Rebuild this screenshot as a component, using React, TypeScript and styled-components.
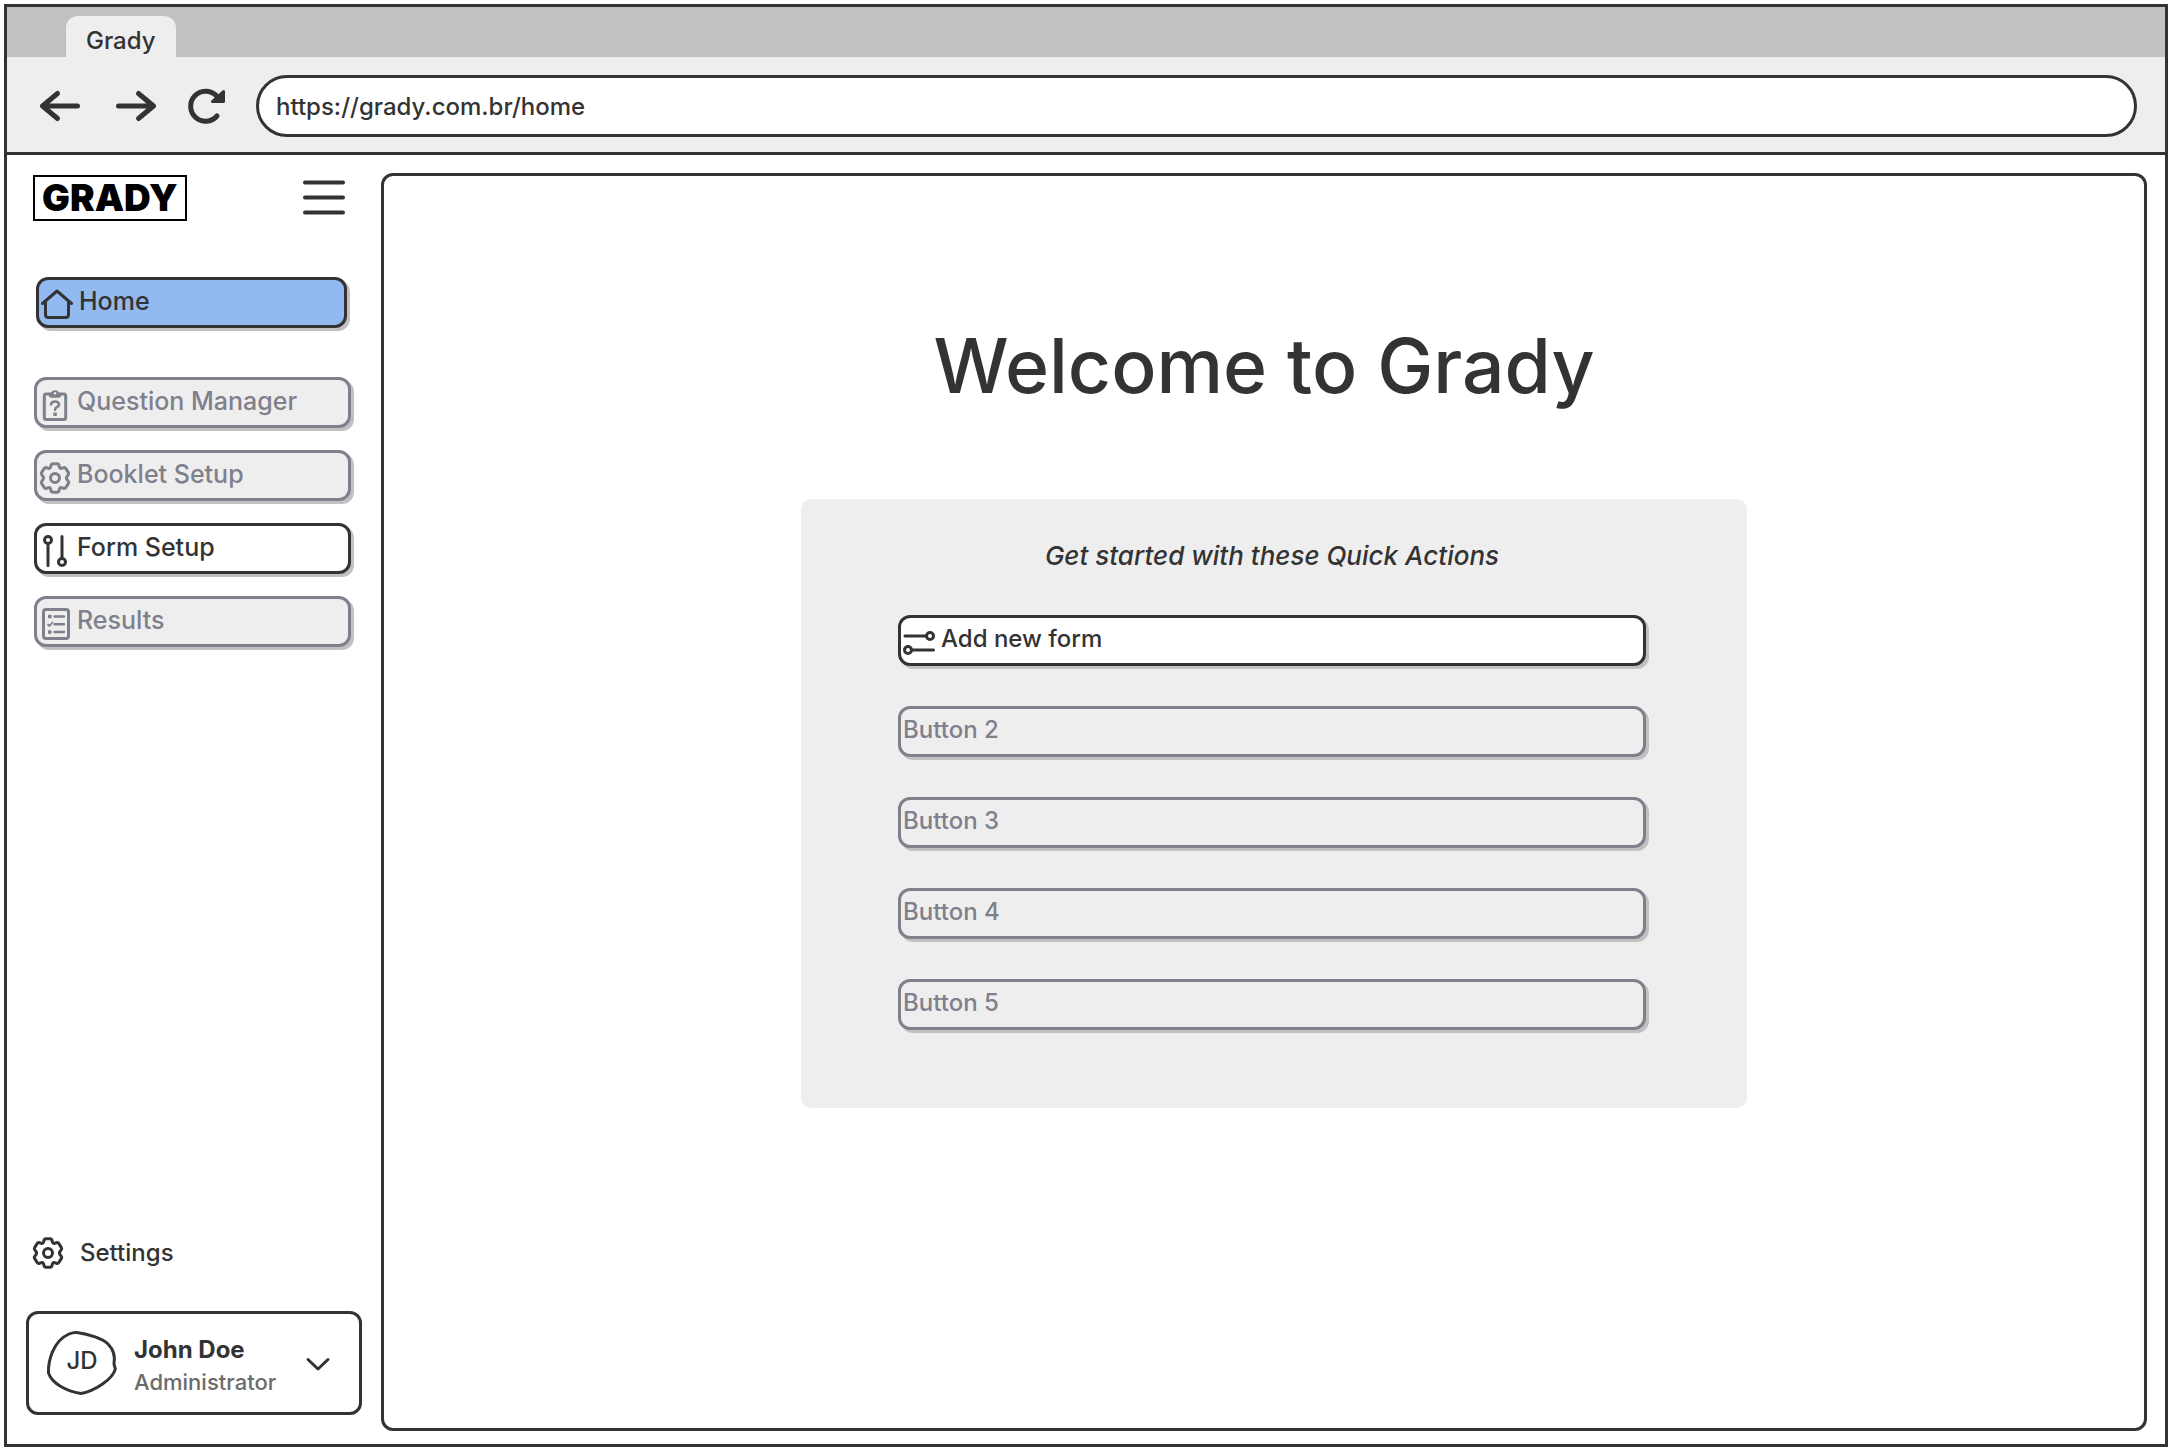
import React from 'react';
import styled, { createGlobalStyle } from 'styled-components';

const INK = '#333333';
const MUTED = '#80808c';
const PAPER = '#ffffff';
const PANEL = '#eeeeee';
const SHADE = '#c1c1c1';
const ACCENT = '#93b9f1';

const GlobalStyle = createGlobalStyle`
  *, *::before, *::after { box-sizing: border-box; }
  body {
    margin: 0;
    padding: 4px 4px 5px;
    background: ${PAPER};
    color: ${INK};
    font-family: Inter, "Open Sans", sans-serif;
    font-size: 24px;
    font-weight: 500;
    line-height: 32px;
  }
  button, input { font: inherit; color: inherit; }
  svg { display: block; overflow: visible; }
`;

const Window = styled.div`
  display: flex;
  flex-direction: column;
  min-height: calc(100vh - 9px);
  border: 3px solid ${INK};
`;

const TabStrip = styled.div`
  display: flex;
  align-items: flex-end;
  height: 50px;
  padding-left: 59px;
  background: ${SHADE};
`;

const Tab = styled.button`
  height: 41px;
  padding: 8px 20px 0;
  border: 0;
  border-radius: 12px 12px 0 0;
  background: ${PANEL};
`;

const Toolbar = styled.div`
  display: flex;
  align-items: center;
  gap: 21px;
  padding: 18px 28px 15px 30px;
  border-bottom: 3px solid ${INK};
  background: ${PANEL};
`;

const HistoryButtons = styled.div`
  display: flex;
  gap: 30px;
`;

const IconButton = styled.button`
  padding: 0;
  border: 0;
  background: none;
`;

const AddressInput = styled.input`
  flex: 1;
  min-width: 0;
  height: 62px;
  padding: 0 17px;
  border: 3px solid ${INK};
  border-radius: 31px;
  background: ${PAPER};
  outline: none;
`;

const Body = styled.div`
  display: flex;
  flex: 1;
`;

const Sidebar = styled.aside`
  display: flex;
  flex-direction: column;
  flex: none;
  width: 374px;
  padding: 20px 19px 29px;
`;

const SidebarHeader = styled.header`
  display: flex;
  align-items: center;
  justify-content: space-between;
  padding: 0 17px 0 7px;
`;

const Logo = styled.div`
  padding: 0 7px;
  border: 2px solid #000000;
  color: #000000;
  font-size: 37px;
  font-weight: 900;
  line-height: 42px;
`;

const Nav = styled.nav`
  display: flex;
  flex-direction: column;
  gap: 49px;
  margin-top: 56px;
`;

const NavGroup = styled.div<{ $inset?: boolean }>`
  display: flex;
  flex-direction: column;
  gap: 22px;
  padding: ${(p) => (p.$inset ? '0 15px 0 10px' : '0 11px 0 8px')};
`;

const ActionButton = styled.button<{ $active?: boolean; $size?: number }>`
  display: flex;
  align-items: center;
  gap: 6px;
  width: 100%;
  height: 51px;
  padding: 0 2px;
  border: 3px solid ${INK};
  border-radius: 12px;
  background: ${(p) => (p.$active ? ACCENT : PAPER)};
  box-shadow: 3px 3px 0 ${SHADE};
  font-size: ${(p) => p.$size ?? 24}px;
  text-align: left;

  &:disabled {
    border-color: ${MUTED};
    background: ${PANEL};
    color: ${MUTED};
  }
  svg { margin-top: 4px; }
`;

const ActionLabel = styled.span`
  padding-bottom: 4px;
`;

const SettingsButton = styled.button`
  display: flex;
  align-items: center;
  gap: 16px;
  margin: auto 0 42px;
  padding: 0 6px;
  border: 0;
  background: none;
`;

const UserCard = styled.button`
  display: flex;
  align-items: center;
  gap: 17px;
  height: 104px;
  padding: 0 29px 0 18px;
  border: 3px solid ${INK};
  border-radius: 12px;
  background: ${PAPER};
  text-align: left;
`;

const Avatar = styled.span`
  display: grid;
  place-items: center;
  width: 70px;
  height: 64px;
  > * { grid-area: 1 / 1; }
`;

const Initials = styled.span`
  padding-bottom: 4px;
`;

const UserText = styled.span`
  display: flex;
  flex: 1;
  flex-direction: column;
  padding-top: 5px;
`;

const UserName = styled.strong`
  font-weight: 700;
`;

const UserRole = styled.span`
  color: #6b6b6b;
  font-size: 22px;
`;

const Main = styled.main`
  display: flex;
  flex: 1;
  flex-direction: column;
  align-items: center;
  min-width: 0;
  margin: 18px 18px 13px 0;
  padding: 145px 20px 40px;
  border: 3px solid ${INK};
  border-radius: 12px;
`;

const Title = styled.h1`
  margin: 0;
  font-size: 75px;
  font-weight: 500;
  line-height: 90px;
`;

const QuickActionsArea = styled.div`
  display: flex;
  justify-content: center;
  width: 100%;
  margin-top: 88px;
  padding-left: 20px;
`;

const QuickActions = styled.section`
  width: 100%;
  max-width: 946px;
  padding: 41px 101px 78px 97px;
  border-radius: 10px;
  background: ${PANEL};
`;

const QuickTitle = styled.h2`
  margin: 0 0 43px;
  font-size: 26px;
  font-style: italic;
  font-weight: 500;
  line-height: 32px;
  text-align: center;
`;

const QuickList = styled.div`
  display: flex;
  flex-direction: column;
  gap: 40px;
`;

type DrawingProps = { width?: number; height?: number; stroke?: number; children: React.ReactNode };

const Drawing = ({ width = 32, height = 32, stroke = 3, children }: DrawingProps) => (
  <svg
    width={width}
    height={height}
    viewBox={`0 0 ${width} ${height}`}
    fill="none"
    stroke="currentColor"
    strokeWidth={stroke}
    strokeLinecap="round"
    strokeLinejoin="round"
    aria-hidden="true"
  >
    {children}
  </svg>
);

const BackIcon = () => (
  <Drawing width={46} height={46} stroke={5}>
    <path d="M20.500 10.500 5.500 23l15 12.500M5.500 23H40.500" />
  </Drawing>
);

const ForwardIcon = () => (
  <Drawing width={46} height={46} stroke={5}>
    <path d="M25.500 10.500 40.500 23l-15 12.500M40.500 23H5.500" />
  </Drawing>
);

const ReloadIcon = () => (
  <Drawing width={46} height={46} stroke={5}>
    <path d="M27.100 12.400A15 15 0 1 0 28 33" />
    <path d="M34.500 8.500v10H23.500Z" fill="currentColor" strokeWidth={3} />
  </Drawing>
);

const MenuIcon = () => (
  <Drawing width={42} height={34} stroke={4}>
    <path d="M2 1.500h38M2 16.500h38M2 31.500h38" />
  </Drawing>
);

const HomeIcon = () => (
  <Drawing>
    <path d="M1.500 14.500 16 2l14.500 12.500M4.500 12.500v13q0 3 3 3h17q3 0 3-3v-13" />
  </Drawing>
);

const QuestionIcon = () => (
  <Drawing>
    <rect x="5.300" y="5" width="21.400" height="25.500" rx="2" />
    <path d="M10.500 4.500h2.200a3.400 3.400 0 0 1 6.600 0h2.200v1.500q0 2-2 2h-7q-2 0-2-2Z" fill="currentColor" strokeWidth={1.5} />
    <circle cx="16" cy="4.300" r="1.200" fill={PANEL} stroke="none" />
    <path d="M12 15.500q.5-3 4-3t4 2.800q0 2-2.300 2.900-1.700.7-1.700 2.600" strokeWidth={2.6} />
    <rect x="14.300" y="23.500" width="3.600" height="3.600" rx=".6" fill="currentColor" stroke="none" />
  </Drawing>
);

const GearIcon = () => (
  <Drawing>
    <path d="M14 1.800H18Q19.600 1.800 20 3.400L20.400 5Q21 6.800 22.800 6.300L24.400 5.700Q26 5.200 26.900 6.600L29.400 10.600Q30.200 12 29 13.200L28.300 13.900Q26.600 16 28.300 18.100L29 18.800Q30.200 20 29.400 21.400L26.900 25.400Q26 26.800 24.400 26.300L22.800 25.700Q21 25.200 20.400 27L20 28.600Q19.600 30.200 18 30.200H14Q12.400 30.200 12 28.600L11.600 27Q11 25.200 9.200 25.700L7.600 26.300Q6 26.800 5.100 25.400L2.600 21.400Q1.800 20 3 18.800L3.700 18.100Q5.400 16 3.700 13.900L3 13.200Q1.800 12 2.600 10.600L5.100 6.600Q6 5.200 7.600 5.700L9.200 6.300Q11 6.800 11.600 5L12 3.400Q12.400 1.800 14 1.800Z" />
    <circle cx="16" cy="16" r="4.500" />
  </Drawing>
);

const SlidersIcon = () => (
  <Drawing>
    <circle cx="9" cy="5" r="3.500" />
    <path d="M9 8.500v22M23 1.500v21.500" />
    <circle cx="23" cy="27" r="3.500" />
  </Drawing>
);

const FlatSlidersIcon = () => (
  <Drawing>
    <circle cx="27" cy="9" r="3.500" />
    <path d="M2 9h21.500M8.500 23h22" />
    <circle cx="5" cy="23" r="3.500" />
  </Drawing>
);

const ResultsIcon = () => (
  <Drawing>
    <rect x="4.500" y="1.500" width="25" height="29" rx="2.500" />
    <path d="M15.500 8.500h9.500M15.500 16.200h9.500M15.500 24h9.500" strokeWidth={2.4} />
    <path d="m9 16.500 1.500 1.500 3-3.500" strokeWidth={1.8} />
    <rect x="9" y="6.700" width="3.600" height="3.600" rx=".6" fill="currentColor" stroke="none" />
    <rect x="9" y="22.200" width="3.600" height="3.600" rx=".6" fill="currentColor" stroke="none" />
  </Drawing>
);

const ChevronIcon = () => (
  <Drawing width={24} height={14}>
    <path d="m2 3.500 10 9.500L22 3.500" />
  </Drawing>
);

const AvatarRing = () => (
  <Drawing width={70} height={64}>
    <path d="M30 1.500C42 3 56 8 61 13C67 19 68.500 25 67 33L68.300 38C66 48 48 60 34 62.500C20 60 5 53 1.500 42C1 30 6 10 22 3Q26 1.300 30 1.500Z" />
  </Drawing>
);

const navItems = [
  { label: 'Question Manager', Icon: QuestionIcon, disabled: true },
  { label: 'Booklet Setup', Icon: GearIcon, disabled: true },
  { label: 'Form Setup', Icon: SlidersIcon, disabled: false },
  { label: 'Results', Icon: ResultsIcon, disabled: true },
];

const quickActions = ['Button 2', 'Button 3', 'Button 4', 'Button 5'];

export default function App() {
  return (
    <>
      <GlobalStyle />
      <Window>
        <TabStrip>
          <Tab type="button">Grady</Tab>
        </TabStrip>
        <Toolbar>
          <HistoryButtons>
            <IconButton type="button" aria-label="Back"><BackIcon /></IconButton>
            <IconButton type="button" aria-label="Forward"><ForwardIcon /></IconButton>
            <IconButton type="button" aria-label="Reload"><ReloadIcon /></IconButton>
          </HistoryButtons>
          <AddressInput type="text" aria-label="Address" defaultValue="https://grady.com.br/home" />
        </Toolbar>
        <Body>
          <Sidebar>
            <SidebarHeader>
              <Logo>GRADY</Logo>
              <IconButton type="button" aria-label="Menu"><MenuIcon /></IconButton>
            </SidebarHeader>
            <Nav>
              <NavGroup $inset>
                <ActionButton type="button" $active $size={25} aria-current="page">
                  <HomeIcon />
                  <ActionLabel>Home</ActionLabel>
                </ActionButton>
              </NavGroup>
              <NavGroup>
                {navItems.map(({ label, Icon, disabled }) => (
                  <ActionButton key={label} type="button" disabled={disabled} $size={25}>
                    <Icon />
                    <ActionLabel>{label}</ActionLabel>
                  </ActionButton>
                ))}
              </NavGroup>
            </Nav>
            <SettingsButton type="button">
              <GearIcon />
              Settings
            </SettingsButton>
            <UserCard type="button">
              <Avatar>
                <AvatarRing />
                <Initials>JD</Initials>
              </Avatar>
              <UserText>
                <UserName>John Doe</UserName>
                <UserRole>Administrator</UserRole>
              </UserText>
              <ChevronIcon />
            </UserCard>
          </Sidebar>
          <Main>
            <Title>Welcome to Grady</Title>
            <QuickActionsArea>
              <QuickActions>
                <QuickTitle>Get started with these Quick Actions</QuickTitle>
                <QuickList>
                  <ActionButton type="button">
                    <FlatSlidersIcon />
                    <ActionLabel>Add new form</ActionLabel>
                  </ActionButton>
                  {quickActions.map((label) => (
                    <ActionButton key={label} type="button" disabled>
                      <ActionLabel>{label}</ActionLabel>
                    </ActionButton>
                  ))}
                </QuickList>
              </QuickActions>
            </QuickActionsArea>
          </Main>
        </Body>
      </Window>
    </>
  );
}
